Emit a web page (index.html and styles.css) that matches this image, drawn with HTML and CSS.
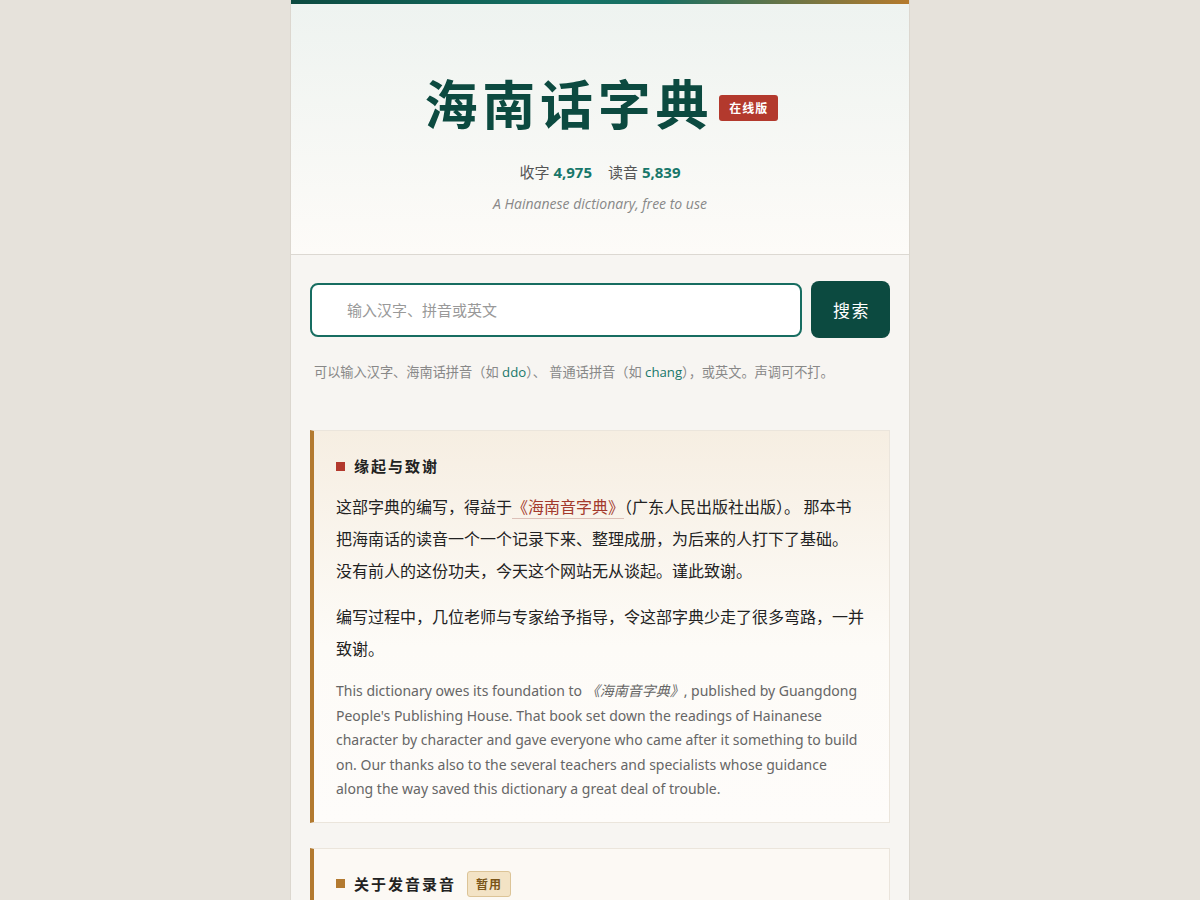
FILE: index.html
```html
<!DOCTYPE html>
<html lang="zh">
<head>
<meta charset="utf-8">
<title>海南话字典</title>
<link rel="stylesheet" href="styles.css">
</head>
<body>
<div class="page">
  <div class="topbar"></div>
  <header class="hero">
    <div class="title-row">
      <h1 class="title">海南话字典</h1>
      <span class="badge-online">在线版</span>
    </div>
    <p class="stats">收字 <b>4,975</b><span class="sep"></span>读音 <b>5,839</b></p>
    <p class="tagline">A Hainanese dictionary, free to use</p>
  </header>
  <main class="main">
    <form class="search">
      <input class="search-input" type="text" placeholder="输入汉字、拼音或英文">
      <button class="search-btn" type="button">搜索</button>
    </form>
    <p class="hint">可以输入汉字、海南话拼音（如 <span class="code">ddo</span>）、 普通话拼音（如 <span class="code">chang</span>），或英文。声调可不打。</p>

    <section class="card">
      <h2 class="card-title"><span class="bullet red"></span>缘起与致谢</h2>
      <p class="zh">这部字典的编写，得益于<a class="book">《海南音字典》</a>（广东人民出版社出版）。
        那本书把海南话的读音一个一个记录下来、整理成册，为后来的人打下了基础。
        没有前人的这份功夫，今天这个网站无从谈起。谨此致谢。</p>
      <p class="zh">编写过程中，几位老师与专家给予指导，令这部字典少走了很多弯路，一并致谢。</p>
      <p class="en">This dictionary owes its foundation to <i>《海南音字典》</i>, published by Guangdong People's Publishing House. That book set down the readings of Hainanese character by character and gave everyone who came after it something to build on. Our thanks also to the several teachers and specialists whose guidance along the way saved this dictionary a great deal of trouble.</p>
    </section>

    <section class="card">
      <h2 class="card-title"><span class="bullet gold"></span>关于发音录音<span class="badge-temp">暂用</span></h2>
      <p class="zh">目前网站上的发音录音为临时版本，仅供参考。</p>
    </section>
  </main>
</div>
</body>
</html>
```
FILE: styles.css
```css
html, body {
  margin: 0;
  padding: 0;
}
body {
  background: #e6e2db;
  font-family: "Open Sans", "Noto Sans CJK SC", sans-serif;
  color: #222;
}
.page {
  width: 618px;
  margin: 0 auto;
  background: #f7f5f2;
  border-left: 1px solid #dcd7cf;
  border-right: 1px solid #dcd7cf;
  min-height: 900px;
}
.topbar {
  height: 4px;
  background: linear-gradient(90deg, #0c4a40 0%, #147266 45%, #1a6f62 60%, #b57a2c 100%);
}
.hero {
  background: linear-gradient(180deg, #eef3f0 0%, #fdfbf8 100%);
  border-bottom: 1px solid #dcd8d2;
  text-align: center;
  padding: 66px 0 40px;
}
.title-row {
  display: flex;
  justify-content: center;
  align-items: center;
  gap: 4px;
  padding-left: 3px;
}
.title {
  margin: 0;
  font-family: "Noto Sans CJK SC", sans-serif;
  font-weight: 700;
  font-size: 53px;
  line-height: 64px;
  letter-spacing: 4.75px;
  color: #0c4a40;
}
.badge-online {
  background: #b3392d;
  color: #fff;
  font-family: "Noto Sans CJK SC", sans-serif;
  font-size: 12px;
  font-weight: 700;
  letter-spacing: 1px;
  line-height: 18px;
  padding: 4px 10px 4px 10px;
  border-radius: 3px;
  margin-top: 12px;
  margin-left: 2px;
}
.stats {
  margin: 27px 0 0;
  font-size: 15px;
  line-height: 22px;
  color: #555;
}
.stats b {
  color: #17776a;
  font-weight: 700;
}
.stats .sep {
  display: inline-block;
  width: 16px;
}
.tagline {
  margin: 11px 0 0;
  font-size: 14px;
  font-style: italic;
  line-height: 20px;
  color: #888;
}
.main {
  padding: 26px 19px 20px;
}
.search {
  display: flex;
  gap: 9px;
  align-items: center;
}
.search-input {
  flex: 1;
  height: 54px;
  box-sizing: border-box;
  border: 2px solid #176d61;
  border-radius: 8px;
  background: #fff;
  padding: 0 0 0 35px;
  font-family: "Noto Sans CJK SC", sans-serif;
  font-size: 15px;
  color: #222;
  outline: none;
}
.search-input::placeholder {
  color: #999;
}
.search-btn {
  width: 79px;
  height: 57px;
  border: none;
  border-radius: 8px;
  background: #0c4a40;
  color: #fff;
  font-family: "Noto Sans CJK SC", sans-serif;
  font-size: 17px;
  letter-spacing: 1.5px;
  padding: 0 0 0 2px;
}
.hint {
  margin: 24px 0 0 4px;
  font-size: 13.2px;
  line-height: 20px;
  color: #888;
}
.hint .code {
  color: #17776a;
}
.card {
  margin-top: 48px;
  background: linear-gradient(180deg, #f6eee2 0%, #fdfbf7 55%, #fefcfa 100%);
  border: 1px solid #ebe5dc;
  border-left: 4px solid #b37a30;
  padding: 20px 24px 20px 22px;
}
.card + .card {
  margin-top: 25px;
  background: #fcf9f4;
}
.card-title {
  margin: 0;
  display: flex;
  align-items: center;
  font-family: "Noto Sans CJK SC", sans-serif;
  font-size: 15px;
  font-weight: 700;
  line-height: 30px;
  letter-spacing: 2px;
  color: #222;
}
.bullet {
  width: 9px;
  height: 9px;
  margin-right: 9px;
  flex: none;
}
.bullet.red { background: #b3392d; }
.bullet.gold { background: #b37a30; }
.badge-temp {
  margin-left: 11px;
  background: #f3e3c5;
  border: 1px solid #dcc497;
  color: #7a5518;
  font-size: 12px;
  line-height: 16px;
  letter-spacing: 1px;
  padding: 4px 8px;
  border-radius: 3px;
}
.zh {
  margin: 9px 0 0;
  font-family: "Noto Sans CJK SC", sans-serif;
  font-size: 16px;
  line-height: 32px;
  color: #222;
}
.zh + .zh {
  margin-top: 14px;
}
.book {
  color: #a3392c;
  border-bottom: 1px solid #dcc0b8;
  text-decoration: none;
}
.en {
  margin: 14px 0 0;
  font-family: "Noto Sans", "Noto Sans CJK SC", sans-serif;
  font-size: 14px;
  line-height: 24.5px;
  color: #666;
}
.en i {
  font-family: "Noto Sans CJK SC", sans-serif;
}
```
